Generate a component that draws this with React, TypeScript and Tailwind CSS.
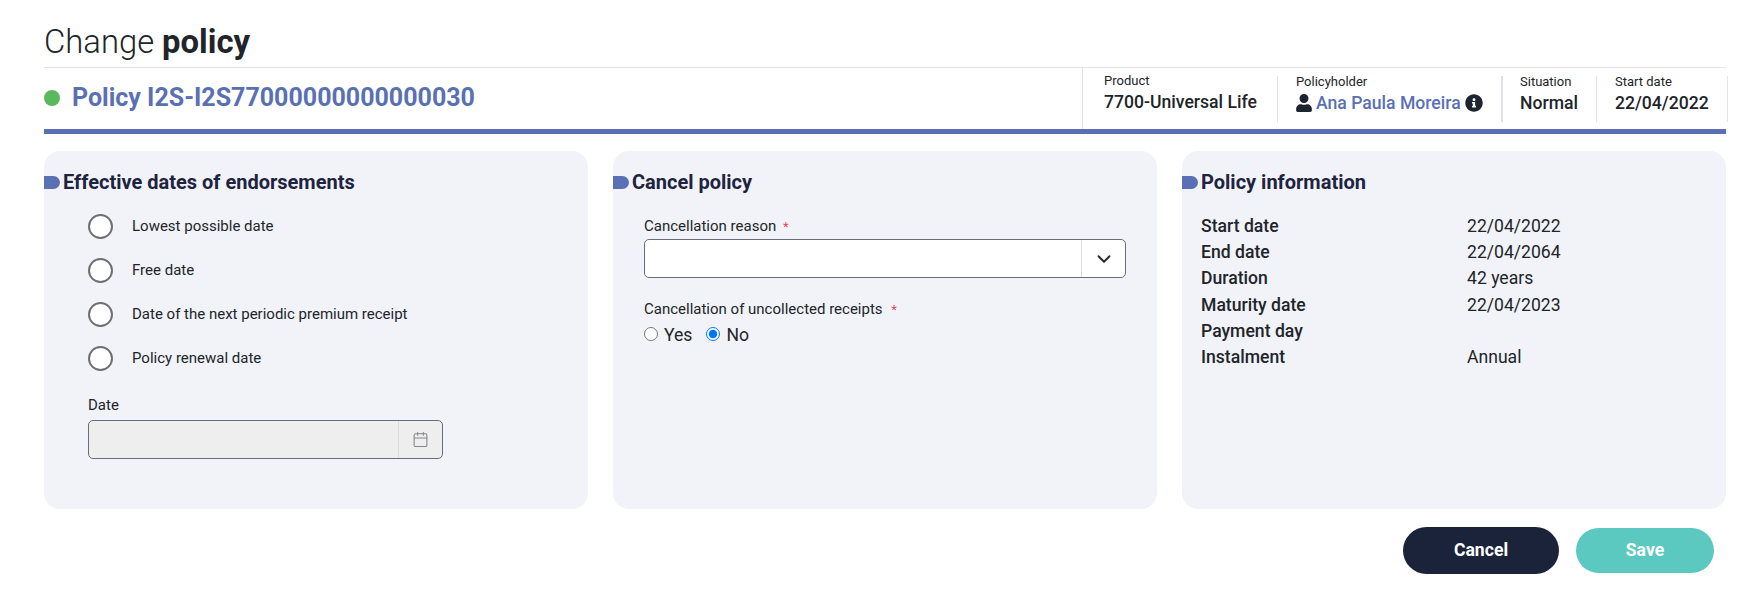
import { Calendar, ChevronDown } from "lucide-react";
import { FaInfoCircle, FaUser } from "react-icons/fa";

const dateOptions = [
  "Lowest possible date",
  "Free date",
  "Date of the next periodic premium receipt",
  "Policy renewal date",
];

const policyInfo = [
  { label: "Start date", value: "22/04/2022" },
  { label: "End date", value: "22/04/2064" },
  { label: "Duration", value: "42 years" },
  { label: "Maturity date", value: "22/04/2023" },
  { label: "Payment day", value: "" },
  { label: "Instalment", value: "Annual" },
];

function CardTitle({ children }: { children: string }) {
  return (
    <div className="flex items-center gap-[3px] h-[26px]">
      <span className="w-4 h-[13px] bg-[#5a70b5] rounded-r-[7px]" />
      <h2 className="text-[20px] leading-[26px] font-bold text-[#1e2440]">{children}</h2>
    </div>
  );
}

export default function App() {
  return (
    <div className="bg-white min-h-[594px] pl-[44px] pr-[31px] font-['Roboto',sans-serif] text-[#212529]">
      {/* Page title */}
      <h1 className="text-[32.8px] leading-[49px] h-[67px] pt-[18px] font-light box-border">
        Change <span className="font-bold">policy</span>
      </h1>

      {/* Policy header */}
      <div className="flex items-center justify-between h-[67px] border-t border-[#e3e4e8] border-b-[5px] border-b-[#5a70b5]">
        <div className="flex items-center gap-3 pb-[2px]">
          <span className="w-4 h-4 rounded-full bg-[#5cb85c]" />
          <span className="text-[25px] font-bold text-[#5a70b5]">Policy I2S-I2S77000000000000030</span>
        </div>
        <div className="flex self-stretch -mr-[2px] whitespace-nowrap">
          <div className="border-l border-[#e3e4e8] pl-[21px] pb-[9px] flex flex-col justify-center w-[195px]">
            <div className="text-[13px] leading-[16px]">Product</div>
            <div className="text-[17.6px] leading-[26px] font-medium">7700-Universal Life</div>
          </div>
          <div className="flex items-center">
            <div className="border-l border-[#e3e4e8] h-[46px] pl-[18px] pb-[7px] w-[224px] flex flex-col justify-center">
              <div className="text-[13px] leading-[16px]">Policyholder</div>
              <div className="flex items-center text-[17.6px] leading-[26px] font-medium">
                <FaUser className="w-4 h-[18px] mr-1 text-[#1e2430]" />
                <span className="text-[#5a70b5]">Ana Paula Moreira</span>
                <FaInfoCircle className="w-[18px] h-[18px] ml-1 text-[#1e2430]" />
              </div>
            </div>
            <div className="border-l-2 border-[#dfe2ec] h-[46px] pl-[17px] pb-[7px] w-[95px] flex flex-col justify-center">
              <div className="text-[13px] leading-[16px]">Situation</div>
              <div className="text-[17.6px] leading-[26px] font-medium">Normal</div>
            </div>
            <div className="border-l border-[#e3e4e8] border-r h-[46px] pl-[18px] pb-[7px] w-[132px] flex flex-col justify-center">
              <div className="text-[13px] leading-[16px]">Start date</div>
              <div className="text-[17.6px] leading-[26px] font-medium">22/04/2022</div>
            </div>
          </div>
        </div>
      </div>

      {/* Cards */}
      <div className="grid grid-cols-3 gap-[25px] mt-[17px]">
        <section className="bg-[#f2f3f9] rounded-[16px] h-[358px] pt-[18px]">
          <CardTitle>Effective dates of endorsements</CardTitle>
          <div className="pl-[44px] pt-[19px]">
            <div className="flex flex-col gap-[19px]">
              {dateOptions.map((o) => (
                <label key={o} className="flex items-center gap-[19px] h-[25px] text-[15px]">
                  <span className="w-[25px] h-[25px] rounded-full bg-white border-2 border-[#6f6f73]" />
                  {o}
                </label>
              ))}
            </div>
            <div className="text-[15px] leading-[20px] mt-[24px]">Date</div>
            <div className="flex w-[355px] h-[39px] mt-[5px] bg-[#eeeeee] border border-[#6c6c78] rounded-[5px]">
              <div className="flex-1" />
              <div className="w-[44px] border-l border-[#dcdcdc] flex items-center justify-center">
                <Calendar className="w-[17px] h-[17px] text-[#85858a]" strokeWidth={1.5} />
              </div>
            </div>
          </div>
        </section>

        <section className="bg-[#f2f3f9] rounded-[16px] h-[358px] pt-[18px]">
          <CardTitle>Cancel policy</CardTitle>
          <div className="pl-[31px] pr-[31px] pt-[21px]">
            <div className="text-[15px] leading-[20px]">
              Cancellation reason <span className="text-[#e8475f] text-[13px] ml-[3px]">*</span>
            </div>
            <div className="flex h-[39px] mt-[2px] bg-white border border-[#6c6c78] rounded-[5px]">
              <div className="flex-1" />
              <div className="w-[44px] border-l border-[#dcdcdc] flex items-center justify-center">
                <ChevronDown className="w-[22px] h-[22px] text-[#212529]" strokeWidth={2} />
              </div>
            </div>
            <div className="text-[15px] leading-[20px] mt-[21px]">
              Cancellation of uncollected receipts <span className="text-[#e8475f] text-[13px] ml-[5px]">*</span>
            </div>
            <div className="flex items-center text-[17.6px] leading-[26px] mt-[2px]">
              <input type="radio" name="uncollected" className="w-[14px] h-[14px] m-0 -mt-[3px]" />
              <span className="ml-[6px]">Yes</span>
              <input type="radio" name="uncollected" defaultChecked className="w-[14px] h-[14px] m-0 -mt-[3px] ml-[14px]" />
              <span className="ml-[6px]">No</span>
            </div>
          </div>
        </section>

        <section className="bg-[#f2f3f9] rounded-[16px] h-[358px] pt-[18px]">
          <CardTitle>Policy information</CardTitle>
          <div className="pl-[19px] pt-[18px] text-[17.6px]">
            {policyInfo.map((r) => (
              <div key={r.label} className="grid grid-cols-[266px_1fr] h-[26.2px] leading-[26px]">
                <span className="font-medium">{r.label}</span>
                <span>{r.value}</span>
              </div>
            ))}
          </div>
        </section>
      </div>

      {/* Actions */}
      <div className="flex justify-end items-center gap-[17px] mt-[18px] pr-3">
        <button className="w-[156px] h-[47px] rounded-full bg-[#1a2339] text-white font-bold text-[17.6px]">Cancel</button>
        <button className="w-[138px] h-[45px] rounded-full bg-[#5bc9bf] text-white font-bold text-[17.6px]">Save</button>
      </div>
    </div>
  );
}
